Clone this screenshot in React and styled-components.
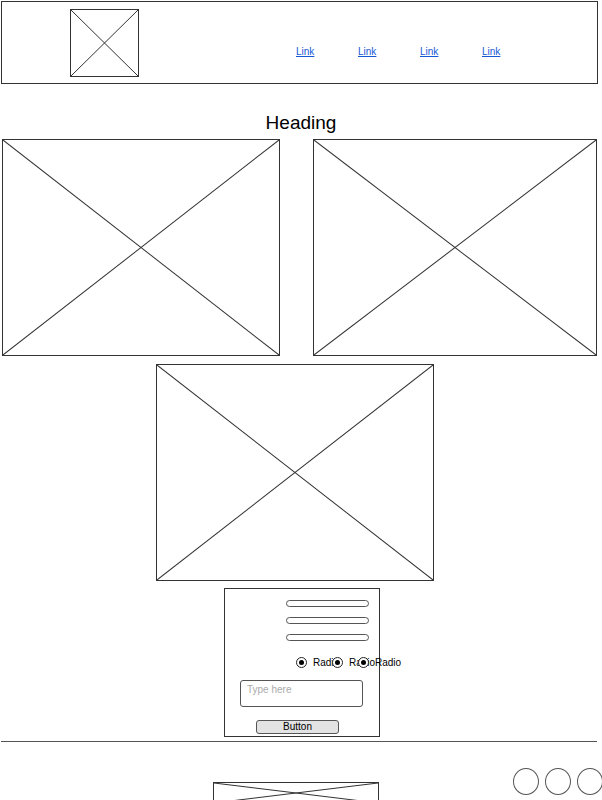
import React from 'react'
import styled, { createGlobalStyle } from 'styled-components'

const GlobalStyle = createGlobalStyle`
  html, body {
    margin: 0;
    padding: 0;
    background: #fff;
    font-family: "Liberation Sans", Arial, sans-serif;
  }
`

const Placeholder = ({ w, h }) => (
  <PlaceholderBox $w={w} $h={h}>
    <svg width="100%" height="100%" viewBox="0 0 100 100" preserveAspectRatio="none">
      <line x1="0" y1="0" x2="100" y2="100" stroke="#333" strokeWidth="1" vectorEffect="non-scaling-stroke" />
      <line x1="100" y1="0" x2="0" y2="100" stroke="#333" strokeWidth="1" vectorEffect="non-scaling-stroke" />
    </svg>
  </PlaceholderBox>
)

export default function App() {
  return (
    <Page>
      <GlobalStyle />
      <Header>
        <Placeholder w={69} h={68} />
        <Nav>
          <NavLink href="#">Link</NavLink>
          <NavLink href="#">Link</NavLink>
          <NavLink href="#">Link</NavLink>
          <NavLink href="#">Link</NavLink>
        </Nav>
      </Header>

      <Heading>Heading</Heading>

      <ImageRow>
        <Placeholder w={278} h={217} />
        <Placeholder w={284} h={217} />
      </ImageRow>

      <CenterRow>
        <Placeholder w={278} h={217} />
      </CenterRow>

      <FormRow>
        <FormBox>
          <Inputs>
            <PillInput />
            <PillInput />
            <PillInput />
          </Inputs>
          <RadioRow>
            <RadioItem $w={36}>
              <RadioDot />
              <RadioLabel>Radio</RadioLabel>
            </RadioItem>
            <RadioItem $w={26}>
              <RadioDot />
              <RadioLabel>Radio</RadioLabel>
            </RadioItem>
            <RadioItem>
              <RadioDot />
              <RadioLabel>Radio</RadioLabel>
            </RadioItem>
          </RadioRow>
          <TextArea>Type here</TextArea>
          <Button>Button</Button>
        </FormBox>
      </FormRow>

      <Rule />

      <Footer>
        <FooterLogo>
          <Placeholder w={166} h={22} />
        </FooterLogo>
        <Socials>
          <Circle />
          <Circle />
          <Circle />
        </Socials>
      </Footer>
    </Page>
  )
}

const Page = styled.div`
  width: 602px;
  height: 800px;
  overflow: hidden;
  padding-top: 1px;
  box-sizing: border-box;
`

const PlaceholderBox = styled.div`
  width: ${p => p.$w}px;
  height: ${p => p.$h}px;
  border: 1px solid #333;
  box-sizing: border-box;
  flex-shrink: 0;
  svg {
    display: block;
  }
`

const Header = styled.header`
  display: flex;
  align-items: center;
  width: 597px;
  height: 83px;
  margin-left: 1px;
  padding-left: 68px;
  border: 1px solid #333;
  box-sizing: border-box;
`

const Nav = styled.nav`
  display: flex;
  margin-left: 157px;
  margin-top: 18px;
`

const NavLink = styled.a`
  width: 62px;
  font-size: 10px;
  color: #1558d6;
  text-decoration: underline;
`

const Heading = styled.h1`
  margin: 0;
  height: 55px;
  display: flex;
  align-items: center;
  justify-content: center;
  padding-top: 22px;
  box-sizing: border-box;
  font-size: 19px;
  font-weight: normal;
  color: #000;
`

const ImageRow = styled.div`
  display: flex;
  gap: 33px;
  padding-left: 2px;
`

const CenterRow = styled.div`
  display: flex;
  padding-left: 156px;
  margin-top: 8px;
`

const FormRow = styled.div`
  display: flex;
  padding-left: 224px;
  margin-top: 7px;
`

const FormBox = styled.div`
  width: 156px;
  height: 149px;
  border: 1px solid #333;
  box-sizing: border-box;
  display: flex;
  flex-direction: column;
  align-items: flex-start;
`

const Inputs = styled.div`
  display: flex;
  flex-direction: column;
  gap: 10px;
  padding: 11px 0 0 61px;
`

const PillInput = styled.div`
  width: 83px;
  height: 7px;
  border: 1px solid #555;
  border-radius: 4px;
  box-sizing: border-box;
  background: #fff;
`

const RadioRow = styled.div`
  display: flex;
  margin-top: 16px;
  padding-left: 71px;
  height: 11px;
  align-items: center;
`

const RadioItem = styled.div`
  display: flex;
  align-items: center;
  gap: 6px;
  width: ${p => (p.$w ? `${p.$w}px` : 'auto')};
  flex-shrink: 0;
  white-space: nowrap;
`

const RadioDot = styled.span`
  position: relative;
  z-index: 1;
  width: 11px;
  height: 11px;
  border: 1.5px solid #222;
  border-radius: 50%;
  box-sizing: border-box;
  background: #fff;
  display: flex;
  align-items: center;
  justify-content: center;
  flex-shrink: 0;
  &::after {
    content: '';
    width: 5px;
    height: 5px;
    border-radius: 50%;
    background: #000;
  }
`

const RadioLabel = styled.span`
  font-size: 10px;
  color: #000;
`

const TextArea = styled.div`
  margin: 12px 0 0 15px;
  width: 123px;
  height: 27px;
  border: 1px solid #555;
  border-radius: 3px;
  box-sizing: border-box;
  padding: 3px 6px;
  font-size: 10px;
  color: #aaa;
`

const Button = styled.button`
  margin: 13px 0 0 31px;
  width: 83px;
  height: 14px;
  padding: 0;
  border: 1px solid #555;
  border-radius: 3px;
  background: #e3e3e3;
  font-family: "Liberation Sans", Arial, sans-serif;
  font-size: 10px;
  line-height: 12px;
  color: #000;
`

const Rule = styled.hr`
  margin: 4px 0 0 1px;
  width: 596px;
  border: none;
  border-top: 1px solid #555;
  height: 0;
`

const Footer = styled.footer`
  display: flex;
  align-items: flex-start;
  padding-top: 26px;
`

const FooterLogo = styled.div`
  margin-left: 213px;
  margin-top: 14px;
`

const Socials = styled.div`
  display: flex;
  gap: 6px;
  margin-left: 134px;
`

const Circle = styled.div`
  width: 26px;
  height: 27px;
  border: 1px solid #555;
  border-radius: 50%;
  box-sizing: border-box;
  flex-shrink: 0;
`
